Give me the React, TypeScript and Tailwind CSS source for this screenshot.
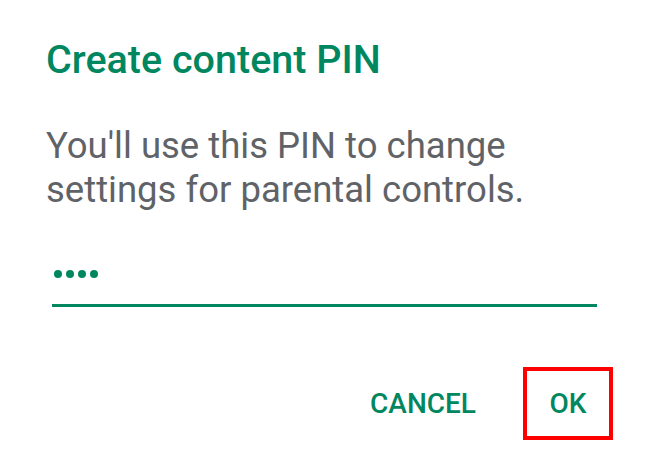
export default function App() {
  return (
    <div className="w-[653px] h-[474px] bg-white font-['Roboto',sans-serif] overflow-hidden">
      <div className="pl-[46px] pr-[56px] pt-[37px]">
        <h1 className="text-[39.5px] leading-[46px] font-medium text-[#01875f]">Create content PIN</h1>
        <p className="mt-[41px] text-[36.5px] leading-[44px] text-[#5f6368]">
          You'll use this PIN to change settings for parental controls.
        </p>
        <div className="ml-[6px] mt-[58px] border-b-[3px] border-[#01875f] pb-[26px]">
          <div className="flex gap-[4px] h-[8px] pl-[2px]">
            <span className="w-[8px] h-[8px] rounded-full bg-[#01875f]" />
            <span className="w-[8px] h-[8px] rounded-full bg-[#01875f]" />
            <span className="w-[8px] h-[8px] rounded-full bg-[#01875f]" />
            <span className="w-[8px] h-[8px] rounded-full bg-[#01875f]" />
          </div>
        </div>
      </div>
      <div className="flex justify-end items-center pr-[40px] mt-[60px] gap-[47px]">
        <button className="text-[28px] leading-[34px] font-medium text-[#01875f]">CANCEL</button>
        <button className="w-[90px] h-[73px] border-[4px] border-[#ff0000] text-[28px] leading-[34px] font-medium text-[#01875f]">
          OK
        </button>
      </div>
    </div>
  );
}
